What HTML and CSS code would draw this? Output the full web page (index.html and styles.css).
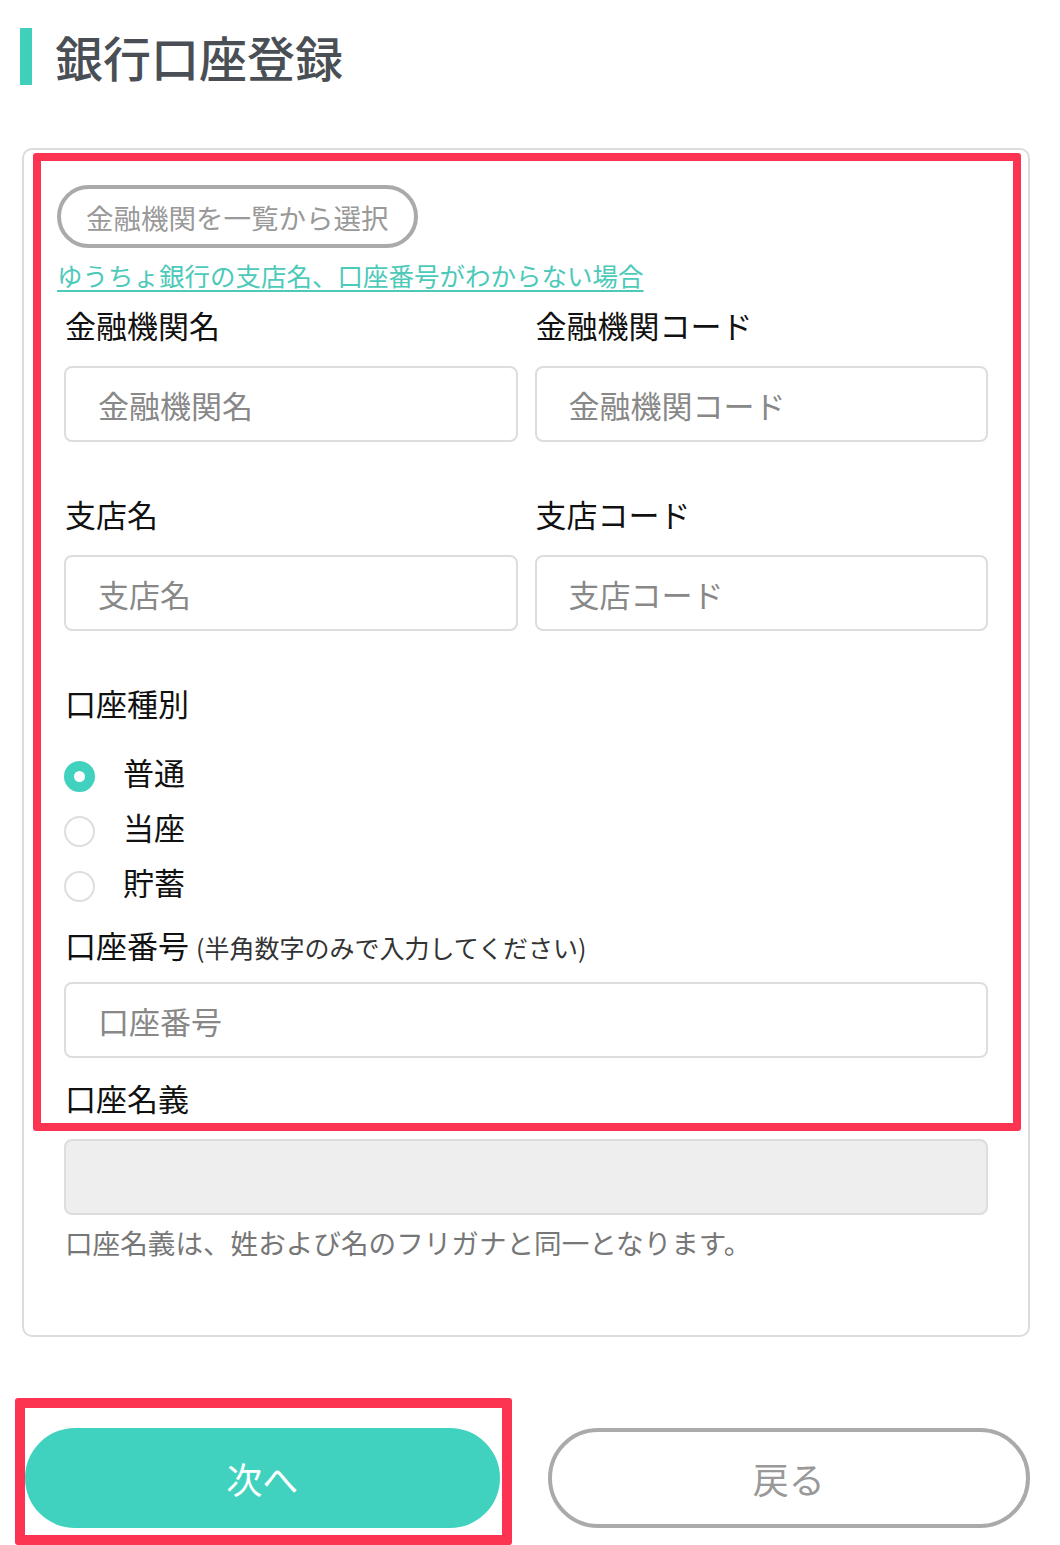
FILE: index.html
```html
<!DOCTYPE html>
<html lang="ja">
<head>
    <meta charset="UTF-8">
    <meta name="viewport" content="width=device-width, initial-scale=1.0">
    <title>銀行口座登録</title>
    <link rel="stylesheet" href="styles.css">
</head>
<body>

<div class="page">
    <h1 class="page-title">銀行口座登録</h1>

    <div class="card">
        <button type="button" class="pick-btn">金融機関を一覧から選択</button>
        <a href="#" class="help-link">ゆうちょ銀行の支店名、口座番号がわからない場合</a>

        <form class="bank-form">
            <div class="row">
                <div class="field">
                    <label for="bankName">金融機関名</label>
                    <input type="text" id="bankName" placeholder="金融機関名">
                </div>
                <div class="field">
                    <label for="bankCode">金融機関コード</label>
                    <input type="text" id="bankCode" placeholder="金融機関コード">
                </div>
            </div>

            <div class="row">
                <div class="field">
                    <label for="branchName">支店名</label>
                    <input type="text" id="branchName" placeholder="支店名">
                </div>
                <div class="field">
                    <label for="branchCode">支店コード</label>
                    <input type="text" id="branchCode" placeholder="支店コード">
                </div>
            </div>

            <div class="field">
                <label>口座種別</label>
                <div class="radios">
                    <label class="radio"><input type="radio" name="type" checked><span>普通</span></label>
                    <label class="radio"><input type="radio" name="type"><span>当座</span></label>
                    <label class="radio"><input type="radio" name="type"><span>貯蓄</span></label>
                </div>
            </div>

            <div class="field tight">
                <label for="accountNo" class="with-note">口座番号 <small>(半角数字のみで入力してください)</small></label>
                <input type="text" id="accountNo" placeholder="口座番号">
            </div>

            <div class="field tight">
                <label for="holder">口座名義</label>
                <input type="text" id="holder" disabled>
                <p class="note">口座名義は、姓および名のフリガナと同一となります。</p>
            </div>
        </form>
    </div>

    <div class="actions">
        <button type="button" class="btn btn-next">次へ</button>
        <button type="button" class="btn btn-back">戻る</button>
    </div>
</div>

<!-- annotation boxes -->
<div class="mark mark-form"></div>
<div class="mark mark-next"></div>

</body>
</html>
```

FILE: styles.css
```css
body {
    font-family: "Noto Sans CJK JP", "Noto Sans", sans-serif;
    margin: 0;
    color: #111;
    background: #fff;
}
.page {
    padding: 28px 30px 0 22px;
}
.page-title {
    margin: 0 0 0 -2px;
    border-left: 12px solid #3fcfbb;
    padding-left: 23px;
    font-size: 48px;
    font-weight: 500;
    line-height: 57px;
    color: #4a4f55;
}
.card {
    margin-top: 63px;
    border: 2px solid #dcdcdc;
    border-radius: 10px;
    padding: 35px 40px 57px 40px;
}
.pick-btn {
    display: block;
    margin-left: -7px;
    height: 63px;
    padding: 0 25px;
    border: 4px solid #aaa;
    border-radius: 32px;
    background: #fff;
    color: #999;
    font-family: inherit;
    font-size: 27.5px;
}
.help-link {
    display: inline-block;
    margin: 9px 0 0 -7px;
    font-size: 25.5px;
    line-height: 36px;
    color: #4cc9b9;
    text-decoration: underline;
    text-underline-offset: 4px;
}
.bank-form {
    margin-top: 10px;
}
.row {
    display: grid;
    grid-template-columns: 1fr 1fr;
    gap: 17px;
}
.field {
    margin-bottom: 50px;
}
.field.tight {
    margin-bottom: 18px;
}
.field > label {
    display: block;
    font-size: 31px;
    line-height: 44px;
    margin-bottom: 19px;
    padding-left: 1px;
}
.field > label.with-note {
    margin-bottom: 15px;
}
.field > label small {
    font-size: 25px;
    line-height: 1;
    color: #333;
}
.field input[type=text] {
    display: block;
    box-sizing: border-box;
    width: 100%;
    height: 76px;
    border: 2px solid #dddddd;
    border-radius: 8px;
    padding: 0 32px;
    font-family: inherit;
    font-size: 31px;
    color: #111;
    background: #fff;
}
.field input[type=text]::placeholder {
    color: #888;
}
.field input[type=text]:disabled {
    background: #eeeeee;
}
.radios {
    margin-top: 15px;
    margin-bottom: -36px;
}
.radio {
    display: flex;
    align-items: center;
    height: 55px;
    font-size: 31px;
}
.radio input {
    appearance: none;
    box-sizing: border-box;
    width: 31px;
    height: 31px;
    margin: 10px 28px 0 0;
    border: 2px solid #dedede;
    border-radius: 50%;
    background: #fff;
}
.radio input:checked {
    border: 10px solid #40d2bf;
}
.note {
    margin: 9px 0 0 1px;
    font-size: 27.6px;
    line-height: 36px;
    color: #777;
}
.actions {
    display: flex;
    gap: 48px;
    margin-top: 91px;
    padding-left: 3px;
}
.btn {
    flex: 1;
    height: 100px;
    border-radius: 50px;
    font-family: inherit;
    font-size: 36px;
}
.btn-next {
    border: none;
    background: #40d2bf;
    color: #fff;
}
.btn-back {
    border: 4px solid #aaa;
    background: #fff;
    color: #999;
}
.mark {
    position: absolute;
    border: 8px solid #fc3452;
    border-radius: 3px;
    box-sizing: border-box;
}
.mark-form {
    left: 33px;
    top: 153px;
    width: 988px;
    height: 978px;
}
.mark-next {
    left: 15px;
    top: 1398px;
    width: 497px;
    height: 147px;
    border-width: 10px;
}
```
